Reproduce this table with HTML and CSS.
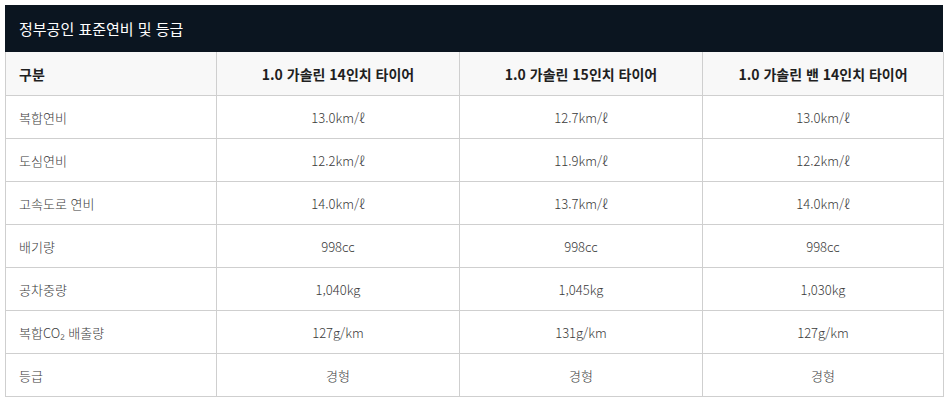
FILE: index.html
```html
<!DOCTYPE html>
<html lang="ko">
<head>
<meta charset="utf-8">
<link rel="stylesheet" href="styles.css">
</head>
<body>
<div class="wrap">
  <div class="title">정부공인 표준연비 및 등급</div>
  <table class="spec">
    <colgroup>
      <col class="c1"><col class="c2"><col class="c3"><col class="c4">
    </colgroup>
    <thead>
      <tr>
        <th class="lbl">구분</th>
        <th>1.0 가솔린 14인치 타이어</th>
        <th>1.0 가솔린 15인치 타이어</th>
        <th>1.0 가솔린 밴 14인치 타이어</th>
      </tr>
    </thead>
    <tbody>
      <tr><td class="lbl">복합연비</td><td>13.0km/ℓ</td><td>12.7km/ℓ</td><td>13.0km/ℓ</td></tr>
      <tr><td class="lbl">도심연비</td><td>12.2km/ℓ</td><td>11.9km/ℓ</td><td>12.2km/ℓ</td></tr>
      <tr><td class="lbl">고속도로 연비</td><td>14.0km/ℓ</td><td>13.7km/ℓ</td><td>14.0km/ℓ</td></tr>
      <tr><td class="lbl">배기량</td><td>998cc</td><td>998cc</td><td>998cc</td></tr>
      <tr><td class="lbl">공차중량</td><td>1,040kg</td><td>1,045kg</td><td>1,030kg</td></tr>
      <tr><td class="lbl">복합CO₂ 배출량</td><td>127g/km</td><td>131g/km</td><td>127g/km</td></tr>
      <tr><td class="lbl">등급</td><td>경형</td><td>경형</td><td>경형</td></tr>
    </tbody>
  </table>
</div>
</body>
</html>
```

FILE: styles.css
```css
html, body {
  margin: 0;
  padding: 0;
  background: #ffffff;
}
body {
  font-family: "Noto Sans CJK KR", "Noto Sans", sans-serif;
}
.wrap {
  padding: 5px 6px 0 5px;
  width: 938px;
}
.title {
  background: #0b1520;
  color: #ffffff;
  height: 47px;
  line-height: 47px;
  padding-left: 14px;
  font-size: 15px;
  font-weight: 400;
  box-sizing: border-box;
}
.spec {
  width: 938px;
  border-collapse: collapse;
  table-layout: fixed;
}
.c1 { width: 211px; }
.c2 { width: 243px; }
.c3 { width: 243px; }
.c4 { width: 241px; }
.spec th, .spec td {
  border: 1px solid #cfcfcf;
  text-align: center;
  padding: 0;
}
.spec th {
  background: #f8f8f8;
  height: 43px;
  font-size: 14px;
  font-weight: 700;
  color: #1f1f1f;
  border-top: none;
}
.spec td {
  height: 42px;
  font-size: 13px;
  font-weight: 300;
  color: #3a3a3a;
}
.spec .lbl {
  text-align: left;
  padding-left: 13px;
}
```
